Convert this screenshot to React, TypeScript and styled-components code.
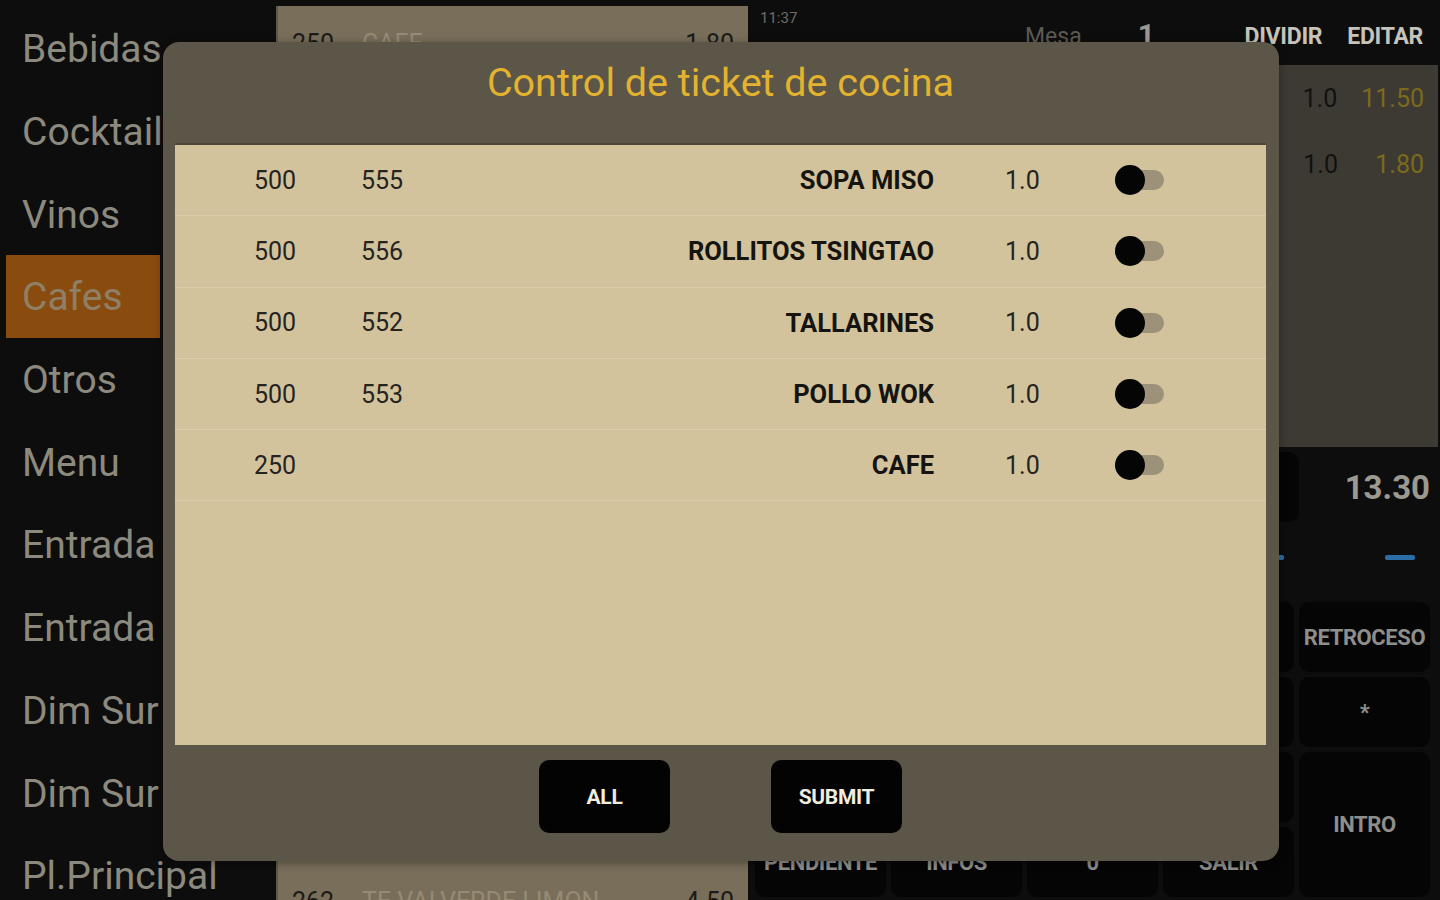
import React from "react"
import styled, { createGlobalStyle } from "styled-components"

const GlobalStyle = createGlobalStyle`
  html, body {
    margin: 0;
    padding: 0;
    background: #0e0d0d;
    font-family: Roboto, "Noto Sans", "Liberation Sans", sans-serif;
  }
  * { box-sizing: border-box; }
`

type TicketLine = {
  course: string
  code: string
  name: string
  qty: string
}

const lines: TicketLine[] = [
  { course: "500", code: "555", name: "SOPA MISO", qty: "1.0" },
  { course: "500", code: "556", name: "ROLLITOS TSINGTAO", qty: "1.0" },
  { course: "500", code: "552", name: "TALLARINES", qty: "1.0" },
  { course: "500", code: "553", name: "POLLO WOK", qty: "1.0" },
  { course: "250", code: "", name: "CAFE", qty: "1.0" },
]

const categories = [
  "Bebidas",
  "Cocktail",
  "Vinos",
  "Cafes",
  "Otros",
  "Menu",
  "Entrada",
  "Entrada",
  "Dim Sur",
  "Dim Sur",
  "Pl.Principal",
]

const keys = [
  { label: "", span: 1 },
  { label: "", span: 1 },
  { label: "", span: 1 },
  { label: "", span: 1 },
  { label: "RETROCESO", span: 1 },
  { label: "", span: 1 },
  { label: "", span: 1 },
  { label: "", span: 1 },
  { label: "", span: 1 },
  { label: "*", span: 1 },
  { label: "", span: 1 },
  { label: "", span: 1 },
  { label: "", span: 1 },
  { label: "", span: 1 },
  { label: "INTRO", span: 2 },
  { label: "PENDIENTE", span: 1 },
  { label: "INFOS", span: 1 },
  { label: "0", span: 1 },
  { label: "SALIR", span: 1 },
]

const App = () => (
  <>
    <GlobalStyle />
    <Screen>
      <Sidebar>
        {categories.map((c, i) => (
          <Category key={`cat_${i}`} $active={c === "Cafes"}>
            {c}
          </Category>
        ))}
      </Sidebar>

      <ProductList>
        <ProductRow>
          <span>250</span>
          <ProductName>CAFE</ProductName>
          <span>1.80</span>
        </ProductRow>
        <ProductRow>
          <span>262</span>
          <ProductName>TE VALVERDE LIMON</ProductName>
          <span>4.50</span>
        </ProductRow>
      </ProductList>

      <Register>
        <Header>
          <Clock>11:37</Clock>
          <Mesa>Mesa</Mesa>
          <MesaNumber>1</MesaNumber>
          <HeaderAction>DIVIDIR</HeaderAction>
          <HeaderAction>EDITAR</HeaderAction>
        </Header>
        <Ticket>
          <TicketRow>
            <span>1.0</span>
            <Price>11.50</Price>
          </TicketRow>
          <TicketRow>
            <span>1.0</span>
            <Price>1.80</Price>
          </TicketRow>
        </Ticket>
        <TotalRow>
          <Display />
          <Total>13.30</Total>
        </TotalRow>
        <DashRow>
          <Dash $width={6} />
          <Dash $width={30} />
        </DashRow>
        <Keypad>
          {keys.map((k, i) => (
            <Key key={`key_${i}`} $span={k.span}>
              {k.label}
            </Key>
          ))}
        </Keypad>
      </Register>

      <Dialog>
        <Title>Control de ticket de cocina</Title>
        <Lines>
          {lines.map((l, i) => (
            <Line key={`line_${i}`}>
              <Cell>{l.course}</Cell>
              <Cell>{l.code}</Cell>
              <Name>{l.name}</Name>
              <Cell>{l.qty}</Cell>
              <Switch>
                <Thumb />
              </Switch>
            </Line>
          ))}
        </Lines>
        <Footer>
          <DialogButton>ALL</DialogButton>
          <DialogButton>SUBMIT</DialogButton>
        </Footer>
      </Dialog>
    </Screen>
  </>
)

export default App

const Screen = styled.div`
  position: relative;
  display: flex;
  width: 1440px;
  height: 900px;
  overflow: hidden;
  background: #0e0d0d;
`

const Sidebar = styled.div`
  width: 162px;
  flex-shrink: 0;
  padding: 7px 0 0 6px;
  display: flex;
  flex-direction: column;
`

const Category = styled.div<{ $active?: boolean }>`
  height: 82.7px;
  flex-shrink: 0;
  display: flex;
  align-items: center;
  padding-left: 16px;
  padding-top: 2px;
  font-size: 39px;
  white-space: nowrap;
  color: ${p => (p.$active ? "#8f7f66" : "#8c8a7e")};
  background: ${p => (p.$active ? "#8a4b0f" : "transparent")};
  margin-right: ${p => (p.$active ? "2px" : "0")};
`

const ProductList = styled.div`
  width: 472px;
  margin: 6px 0 0 114px;
  flex-shrink: 0;
  display: flex;
  flex-direction: column;
  justify-content: space-between;
  background: #786e5a;
  border-left: 2px solid #5f574a;
  padding: 22px 14px 0 14px;
`

const ProductRow = styled.div`
  display: flex;
  align-items: center;
  height: 30px;
  font-size: 25px;
  color: #1d1b17;
  margin-bottom: -16px;

  span:first-child {
    width: 70px;
  }
`

const ProductName = styled.span`
  flex: 1;
  color: #958a73;
`

const Register = styled.div`
  flex: 1;
  display: flex;
  flex-direction: column;
  padding: 0 10px 0 7px;
`

const Header = styled.div`
  height: 65px;
  display: flex;
  align-items: flex-end;
  padding: 0 7px 15px 0;
  position: relative;
`

const Clock = styled.div`
  position: absolute;
  left: 5px;
  top: 9px;
  font-size: 15px;
  color: #6f6c66;
`

const Mesa = styled.div`
  margin-left: 270px;
  font-size: 23px;
  color: #5c5a52;
`

const MesaNumber = styled.div`
  margin-left: 56px;
  font-size: 30px;
  font-weight: 700;
  color: #9a9890;
  line-height: 1;
`

const HeaderAction = styled.div`
  margin-left: auto;
  font-size: 23px;
  font-weight: 700;
  letter-spacing: -0.3px;
  color: #c6c3b9;

  & + & {
    margin-left: 25px;
  }
`

const Ticket = styled.div`
  height: 382px;
  margin-right: -8px;
  background: #3d3a34;
  padding: 19px 0 0 0;
  display: flex;
  flex-direction: column;
  gap: 37px;
`

const TicketRow = styled.div`
  display: flex;
  justify-content: flex-end;
  gap: 24px;
  padding-right: 14px;
  font-size: 25px;
  color: #121110;
`

const Price = styled.span`
  min-width: 62px;
  text-align: right;
  color: #7b6a1c;
`

const TotalRow = styled.div`
  height: 80px;
  display: flex;
  align-items: center;
  gap: 46px;
`

const Display = styled.div`
  flex: 1;
  height: 70px;
  background: #050505;
  border-radius: 10px;
`

const Total = styled.div`
  font-size: 33px;
  font-weight: 700;
  color: #9c9a90;
`

const DashRow = styled.div`
  height: 60px;
  display: flex;
  justify-content: space-between;
  align-items: center;
  padding: 0 15px 0 523px;
`

const Dash = styled.div<{ $width: number }>`
  width: ${p => p.$width}px;
  height: 5px;
  border-radius: 2px;
  background: #2b6ea6;
`

const Keypad = styled.div`
  display: grid;
  grid-template-columns: repeat(5, 131px);
  grid-template-rows: repeat(4, 70px);
  column-gap: 5px;
  row-gap: 5px;
  margin-top: 15px;
`

const Key = styled.div<{ $span: number }>`
  grid-row: span ${p => p.$span};
  display: flex;
  align-items: center;
  justify-content: center;
  background: #050505;
  border-radius: 10px;
  font-size: 22px;
  font-weight: 700;
  letter-spacing: -0.4px;
  color: #8e8e8b;
`

const Dialog = styled.div`
  position: absolute;
  left: 163px;
  top: 42px;
  width: 1116px;
  height: 819px;
  background: #5b5648;
  border-radius: 16px;
  display: flex;
  flex-direction: column;
  padding: 0 13px 0 12px;
  box-shadow: 0 2px 10px rgba(0, 0, 0, 0.35);
`

const Title = styled.div`
  height: 101px;
  display: flex;
  align-items: center;
  justify-content: center;
  padding-bottom: 20px;
  font-size: 39.5px;
  color: #e3b330;
`

const Lines = styled.div`
  height: 602px;
  background: #d3c39d;
  border-top: 2px solid #4d473b;
`

const Line = styled.div`
  height: 71.3px;
  display: grid;
  grid-template-columns: 107px 1fr auto 110px 52px;
  align-items: center;
  padding: 0 99px 0 79px;
  border-bottom: 1px solid #dbcdab;
  font-size: 25px;
  color: #26241f;
`

const Cell = styled.div`
  white-space: nowrap;
`

const Name = styled.div`
  font-weight: 700;
  font-size: 25.5px;
  color: #151410;
  margin-right: 71px;
  text-align: right;
  white-space: nowrap;
`

const Switch = styled.div`
  position: relative;
  width: 49px;
  height: 20px;
  border-radius: 10px;
  background: #9c9279;
`

const Thumb = styled.div`
  position: absolute;
  left: 0;
  top: 50%;
  width: 30px;
  height: 30px;
  margin-top: -15px;
  border-radius: 50%;
  background: #050505;
`

const Footer = styled.div`
  flex: 1;
  display: flex;
  justify-content: center;
  align-items: flex-start;
  gap: 101px;
  padding-top: 15px;
`

const DialogButton = styled.button`
  width: 131px;
  height: 73px;
  border: none;
  border-radius: 10px;
  background: #030303;
  color: #efece0;
  font-family: Roboto, "Noto Sans", "Liberation Sans", sans-serif;
  font-size: 21px;
  font-weight: 700;
  letter-spacing: -0.3px;
`
